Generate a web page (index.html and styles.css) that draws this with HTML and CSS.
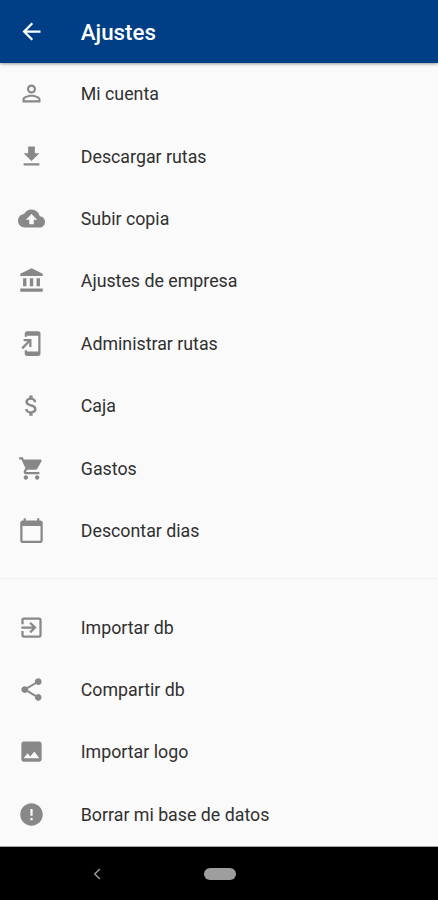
FILE: index.html
```html
<!DOCTYPE html>
<html lang="es">
<head>
    <meta charset="UTF-8">
    <meta name="viewport" content="width=device-width, initial-scale=1.0">
    <title>Ajustes</title>
    <link rel="stylesheet" href="styles.css">
</head>
<body>
    <header class="app-bar">
        <svg class="icon" viewBox="0 0 24 24"><path d="M20 11H7.83l5.59-5.59L12 4l-8 8 8 8 1.41-1.41L7.83 13H20v-2z"/></svg>
        <h1>Ajustes</h1>
    </header>

    <main class="settings">
        <ul class="menu">
            <li class="menu-item">
                <svg class="icon" viewBox="0 0 24 24"><path d="M12 5.9c1.16 0 2.1.94 2.1 2.1s-.94 2.1-2.1 2.1S9.9 9.16 9.9 8s.94-2.1 2.1-2.1m0 9c2.97 0 6.1 1.46 6.1 2.1v1.1H5.9V17c0-.64 3.13-2.1 6.1-2.1M12 4C9.79 4 8 5.79 8 8s1.79 4 4 4 4-1.79 4-4-1.79-4-4-4zm0 9c-2.67 0-8 1.34-8 4v3h16v-3c0-2.66-5.33-4-8-4z"/></svg>
                <span>Mi cuenta</span>
            </li>
            <li class="menu-item">
                <svg class="icon" viewBox="0 0 24 24"><path d="M19 9h-4V3H9v6H5l7 7 7-7zM5 18v2h14v-2H5z"/></svg>
                <span>Descargar rutas</span>
            </li>
            <li class="menu-item">
                <svg class="icon" viewBox="0 0 24 24"><path d="M19.35 10.04C18.67 6.59 15.64 4 12 4 9.11 4 6.6 5.64 5.35 8.04 2.34 8.36 0 10.91 0 14c0 3.31 2.69 6 6 6h13c2.76 0 5-2.24 5-5 0-2.64-2.05-4.78-4.65-4.96zM14 13v4h-4v-4H7l5-5 5 5h-3z"/></svg>
                <span>Subir copia</span>
            </li>
            <li class="menu-item">
                <svg class="icon" viewBox="-0.5 0 24 24"><path d="M4 10v7h3v-7H4zm6 0v7h3v-7h-3zM1.5 22h20v-3h-20v3zM16 10v7h3v-7h-3zM11.5 1l-10 5v2h20V6l-10-5z"/></svg>
                <span>Ajustes de empresa</span>
            </li>
            <li class="menu-item">
                <svg class="icon" viewBox="0 0 24 24"><path d="M18 1.01L8 1c-1.1 0-2 .9-2 2v3h2V5h10v14H8v-1H6v3c0 1.1.9 2 2 2h10c1.1 0 2-.9 2-2V3c0-1.1-.9-1.99-2-1.99zM10 15h2V8H5v2h3.59L3 15.59 4.41 17 10 11.41V15z"/></svg>
                <span>Administrar rutas</span>
            </li>
            <li class="menu-item">
                <svg class="icon" viewBox="0 0 24 24"><path d="M11.8 10.9c-2.27-.59-3-1.2-3-2.15 0-1.09 1.01-1.85 2.7-1.85 1.78 0 2.44.85 2.5 2.1h2.21c-.07-1.72-1.12-3.3-3.21-3.81V3h-3v2.16c-1.94.42-3.5 1.68-3.5 3.61 0 2.31 1.91 3.46 4.7 4.13 2.5.6 3 1.48 3 2.41 0 .69-.49 1.79-2.7 1.79-2.06 0-2.87-.92-2.98-2.1h-2.2c.12 2.19 1.76 3.42 3.68 3.83V21h3v-2.15c1.95-.37 3.5-1.5 3.5-3.55 0-2.84-2.43-3.81-4.7-4.4z"/></svg>
                <span>Caja</span>
            </li>
            <li class="menu-item">
                <svg class="icon" viewBox="0 0 24 24"><path d="M7 18c-1.1 0-1.99.9-1.99 2S5.9 22 7 22s2-.9 2-2-.9-2-2-2zM1 2v2h2l3.6 7.59-1.35 2.45c-.16.28-.25.61-.25.96 0 1.1.9 2 2 2h12v-2H7.42c-.14 0-.25-.11-.25-.25l.03-.12.9-1.63h7.45c.75 0 1.41-.41 1.75-1.03l3.58-6.49c.08-.14.12-.31.12-.48 0-.55-.45-1-1-1H5.21l-.94-2H1zm16 16c-1.1 0-1.99.9-1.99 2s.89 2 1.99 2 2-.9 2-2-.9-2-2-2z"/></svg>
                <span>Gastos</span>
            </li>
            <li class="menu-item">
                <svg class="icon" viewBox="0 0 24 24"><path d="M20 3h-1V1h-2v2H7V1H5v2H4c-1.1 0-2 .9-2 2v16c0 1.1.9 2 2 2h16c1.1 0 2-.9 2-2V5c0-1.1-.9-2-2-2zm0 18H4V8h16v13z"/></svg>
                <span>Descontar dias</span>
            </li>
        </ul>

        <hr class="divider">

        <ul class="menu">
            <li class="menu-item">
                <svg class="icon" viewBox="0 0 24 24"><path d="M10.09 15.59L11.5 17l5-5-5-5-1.41 1.41L12.67 11H3v2h9.67l-2.58 2.59zM19 3H5c-1.11 0-2 .9-2 2v4h2V5h14v14H5v-4H3v4c0 1.1.89 2 2 2h14c1.1 0 2-.9 2-2V5c0-1.1-.9-2-2-2z"/></svg>
                <span>Importar db</span>
            </li>
            <li class="menu-item">
                <svg class="icon" viewBox="0 0 24 24"><path d="M18 16.08c-.76 0-1.44.3-1.96.77L8.91 12.7c.05-.23.09-.46.09-.7s-.04-.47-.09-.7l7.05-4.11c.54.5 1.25.81 2.04.81 1.66 0 3-1.34 3-3s-1.34-3-3-3-3 1.34-3 3c0 .24.04.47.09.7L8.04 9.81C7.5 9.31 6.79 9 6 9c-1.66 0-3 1.34-3 3s1.34 3 3 3c.79 0 1.5-.31 2.04-.81l7.12 4.16c-.05.21-.08.43-.08.65 0 1.61 1.31 2.92 2.92 2.92s2.92-1.31 2.92-2.92-1.31-2.92-2.92-2.92z"/></svg>
                <span>Compartir db</span>
            </li>
            <li class="menu-item">
                <svg class="icon" viewBox="0 0 24 24"><path d="M21 19V5c0-1.1-.9-2-2-2H5c-1.1 0-2 .9-2 2v14c0 1.1.9 2 2 2h14c1.1 0 2-.9 2-2zM8.5 13.5l2.5 3.01L14.5 12l4.5 6H5l3.5-4.5z"/></svg>
                <span>Importar logo</span>
            </li>
            <li class="menu-item">
                <svg class="icon" viewBox="0 0 24 24"><path d="M12 2C6.48 2 2 6.48 2 12s4.48 10 10 10 10-4.48 10-10S17.52 2 12 2zm1 15h-2v-2h2v2zm0-4h-2V7h2v6z"/></svg>
                <span>Borrar mi base de datos</span>
            </li>
        </ul>
    </main>

    <!-- Android navigation bar -->
    <nav class="nav-bar">
        <svg class="nav-back" viewBox="0 0 8 12"><path d="M6.8 1L1.8 6l5 5"/></svg>
        <span class="nav-home"></span>
    </nav>
</body>
</html>
```
FILE: styles.css
```css
* {
    margin: 0;
    padding: 0;
    box-sizing: border-box;
}

body {
    font-family: Roboto, sans-serif;
    background: #fafafa;
    height: 900px;
    display: flex;
    flex-direction: column;
    overflow: hidden;
}

.icon {
    width: 27px;
    height: 27px;
    margin-right: 35.6px;
    fill: currentColor;
    flex-shrink: 0;
}

.app-bar {
    height: 62.6px;
    flex-shrink: 0;
    padding: 1px 18.2px 0;
    display: flex;
    align-items: center;
    background: #003e86;
    color: white;
    box-shadow: 0 1px 3px rgba(0, 0, 0, 0.4);
}

.app-bar h1 {
    font-size: 22.3px;
    font-weight: 500;
}

.settings {
    flex: 1;
    border-bottom: 1px solid #a5a5a5;
}

.menu {
    list-style: none;
}

.menu-item {
    height: 62.4px;
    padding: 0 18.2px;
    display: flex;
    align-items: center;
    color: #303030;
    font-size: 17.8px;
}

.menu-item .icon {
    color: #888;
}

.divider {
    height: 1px;
    margin: 16.6px 0;
    border: none;
    background: #f0f0f0;
}

.nav-bar {
    height: 53px;
    flex-shrink: 0;
    padding-left: 93px;
    display: flex;
    align-items: center;
    background: black;
}

.nav-back {
    width: 8px;
    height: 12px;
    margin-right: 102.5px;
    fill: none;
    stroke: #999;
    stroke-width: 1.5;
}

.nav-home {
    width: 32px;
    height: 12px;
    border-radius: 6px;
    background: #9e9e9e;
}
```
